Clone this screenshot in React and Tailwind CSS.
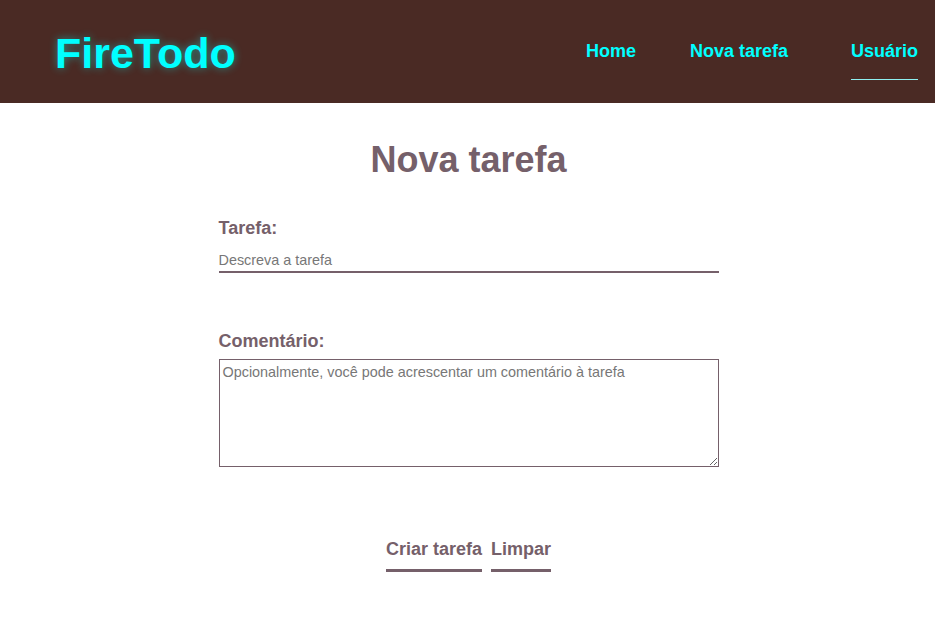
export default function App() {
  return (
    <div className="min-h-[618px] bg-white font-['Liberation_Sans',Arial,sans-serif]">
      <header className="h-[103px] bg-[#4a2a24] flex items-center justify-between pl-[55px] pr-[17px]">
        <h1 className="text-[43px] font-bold text-[#00ffff] leading-none [text-shadow:0_0_8px_rgba(0,255,255,0.45)] mt-[3px]">
          FireTodo
        </h1>
        <nav className="flex items-center text-[18px] font-bold text-[#00ffff]">
          <a className="mr-[54px]">Home</a>
          <a className="mr-[63px]">Nova tarefa</a>
          <a className="relative">
            Usuário
            <span className="absolute left-0 right-0 top-[41px] h-px bg-[#8ff0f0]" />
          </a>
        </nav>
      </header>

      <main className="flex flex-col items-center text-[#75606a] pl-[2px]">
        <h2 className="mt-[39px] text-[36px] font-bold leading-none">Nova tarefa</h2>

        <form className="w-[500px] mt-[41px] flex flex-col">
          <label className="text-[18px] font-bold leading-none">Tarefa:</label>
          <input
            placeholder="Descreva a tarefa"
            className="mt-[14px] h-[22px] pb-[3px] border-b-2 border-[#75606a] text-[14.4px] text-gray-800 placeholder:text-[#777] outline-none"
          />

          <label className="mt-[59px] text-[18px] font-bold leading-none">Comentário:</label>
          <textarea
            placeholder="Opcionalmente, você pode acrescentar um comentário à tarefa"
            className="mt-[9px] h-[108px] border border-[#75606a] px-[3px] py-[2px] text-[14.4px] text-gray-800 placeholder:text-[#777] outline-none"
          />

          <div className="mt-[73px] flex justify-center gap-[9px]">
            <button type="button" className="text-[18px] font-bold leading-none pb-[11px] border-b-[3px] border-[#75606a]">
              Criar tarefa
            </button>
            <button type="button" className="text-[18px] font-bold leading-none pb-[11px] border-b-[3px] border-[#75606a]">
              Limpar
            </button>
          </div>
        </form>
      </main>
    </div>
  );
}
